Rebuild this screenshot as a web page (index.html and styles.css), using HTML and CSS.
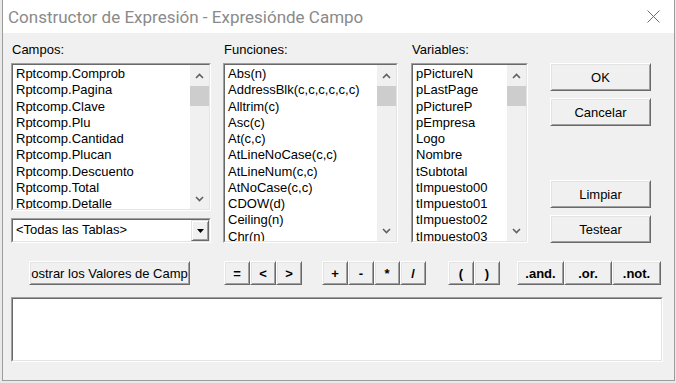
FILE: index.html
```html
<!DOCTYPE html>
<html lang="es">
<head>
<meta charset="utf-8">
<title>Constructor de Expresión</title>
<link rel="stylesheet" href="styles.css">
</head>
<body>
<div class="window">
  <div class="titlebar">
    <span class="title">Constructor de Expresión - Expresiónde Campo</span>
    <span class="close"><svg width="13" height="13" viewBox="0 0 13 13"><path d="M0.5 0.5 L12.5 12.5 M12.5 0.5 L0.5 12.5" stroke="#6e6e6e" stroke-width="1" fill="none"/></svg></span>
  </div>
  <div class="client">
    <div class="top">
      <div class="col col-campos">
        <div class="label">Campos:</div>
        <div class="sunken list list-short">
          <div class="in">
            <div class="items">
              <div>Rptcomp.Comprob</div>
              <div>Rptcomp.Pagina</div>
              <div>Rptcomp.Clave</div>
              <div>Rptcomp.Plu</div>
              <div>Rptcomp.Cantidad</div>
              <div>Rptcomp.Plucan</div>
              <div>Rptcomp.Descuento</div>
              <div>Rptcomp.Total</div>
              <div>Rptcomp.Detalle</div>
            </div>
            <div class="vscroll">
              <div class="arr"><svg width="9" height="6" viewBox="0 0 9 6"><path d="M1 5 L4.5 1.5 L8 5" stroke="#606060" stroke-width="1.6" fill="none"/></svg></div>
              <div class="thumb"></div>
              <div class="track"></div>
              <div class="arr"><svg width="9" height="6" viewBox="0 0 9 6"><path d="M1 1 L4.5 4.5 L8 1" stroke="#606060" stroke-width="1.6" fill="none"/></svg></div>
            </div>
          </div>
        </div>
        <div class="sunken combo">
          <div class="in">
            <span class="combo-text">&lt;Todas las Tablas&gt;</span>
            <span class="combo-btn"><svg width="7" height="4" viewBox="0 0 7 4"><path d="M0 0 L7 0 L3.5 4 Z" fill="#000"/></svg></span>
          </div>
        </div>
      </div>
      <div class="col col-func">
        <div class="label">Funciones:</div>
        <div class="sunken list">
          <div class="in">
            <div class="items">
              <div>Abs(n)</div>
              <div>AddressBlk(c,c,c,c,c,c)</div>
              <div>Alltrim(c)</div>
              <div>Asc(c)</div>
              <div>At(c,c)</div>
              <div>AtLineNoCase(c,c)</div>
              <div>AtLineNum(c,c)</div>
              <div>AtNoCase(c,c)</div>
              <div>CDOW(d)</div>
              <div>Ceiling(n)</div>
              <div>Chr(n)</div>
            </div>
            <div class="vscroll">
              <div class="arr"><svg width="9" height="6" viewBox="0 0 9 6"><path d="M1 5 L4.5 1.5 L8 5" stroke="#606060" stroke-width="1.6" fill="none"/></svg></div>
              <div class="thumb"></div>
              <div class="track"></div>
              <div class="arr"><svg width="9" height="6" viewBox="0 0 9 6"><path d="M1 1 L4.5 4.5 L8 1" stroke="#606060" stroke-width="1.6" fill="none"/></svg></div>
            </div>
          </div>
        </div>
      </div>
      <div class="col col-vars">
        <div class="label">Variables:</div>
        <div class="sunken list">
          <div class="in">
            <div class="items">
              <div>pPictureN</div>
              <div>pLastPage</div>
              <div>pPictureP</div>
              <div>pEmpresa</div>
              <div>Logo</div>
              <div>Nombre</div>
              <div>tSubtotal</div>
              <div>tImpuesto00</div>
              <div>tImpuesto01</div>
              <div>tImpuesto02</div>
              <div>tImpuesto03</div>
            </div>
            <div class="vscroll">
              <div class="arr"><svg width="9" height="6" viewBox="0 0 9 6"><path d="M1 5 L4.5 1.5 L8 5" stroke="#606060" stroke-width="1.6" fill="none"/></svg></div>
              <div class="thumb"></div>
              <div class="track"></div>
              <div class="arr"><svg width="9" height="6" viewBox="0 0 9 6"><path d="M1 1 L4.5 4.5 L8 1" stroke="#606060" stroke-width="1.6" fill="none"/></svg></div>
            </div>
          </div>
        </div>
      </div>
      <div class="col col-btns">
        <div class="btn btn-side">OK</div>
        <div class="btn btn-side btn-cancel">Cancelar</div>
        <div class="btn btn-side btn-clear">Limpiar</div>
        <div class="btn btn-side btn-test">Testear</div>
      </div>
    </div>
    <div class="ops">
      <div class="btn btn-show">ostrar los Valores de Camp</div>
      <div class="group g-cmp">
        <div class="btn op">=</div>
        <div class="btn op">&lt;</div>
        <div class="btn op">&gt;</div>
      </div>
      <div class="group g-arith">
        <div class="btn op">+</div>
        <div class="btn op">-</div>
        <div class="btn op">*</div>
        <div class="btn op">/</div>
      </div>
      <div class="group g-par">
        <div class="btn op">(</div>
        <div class="btn op">)</div>
      </div>
      <div class="group g-log">
        <div class="btn op lop w47">.and.</div>
        <div class="btn op lop w48">.or.</div>
        <div class="btn op lop w49">.not.</div>
      </div>
    </div>
    <div class="sunken editor"><div class="in"></div></div>
  </div>
</div>
</body>
</html>
```

FILE: styles.css
```css
* { box-sizing: border-box; }
html, body { margin: 0; padding: 0; }
body {
  background: #e9e9e9;
  width: 676px;
  height: 383px;
  overflow: hidden;
  font-family: "Liberation Sans", Arial, sans-serif;
  font-size: 13px;
  color: #000;
}
.window {
  margin-left: 2px;
  width: 673px;
  height: 381px;
  border: 1px solid #9c9c9c;
  border-top: none;
  background: #f0f0f0;
}
.titlebar {
  height: 33px;
  background: #fff;
  display: flex;
  align-items: center;
  padding-left: 5px;
  padding-right: 14px;
}
.title {
  font-family: Roboto, "Noto Sans", sans-serif;
  font-size: 17px;
  color: #8a8a8a;
}
.close { margin-left: auto; display: flex; }
.client {
  padding: 9px 11px 0 8px;
}
.top { display: flex; }
.col { display: flex; flex-direction: column; }
.col-campos { width: 200px; }
.col-func { width: 175px; margin-left: 12px; }
.col-vars { width: 117px; margin-left: 13px; }
.col-btns { width: 101px; margin-left: 22px; padding-top: 21px; }
.label {
  height: 21px;
  line-height: 16px;
  padding-left: 1px;
}
.sunken {
  border: 1px solid;
  border-color: #a0a0a0 #fff #fff #a0a0a0;
}
.sunken > .in {
  height: 100%;
  border: 1px solid;
  border-color: #696969 #e3e3e3 #e3e3e3 #696969;
  background: #fff;
}
.list { height: 180px; }
.list-short { height: 148px; }
.list > .in { display: flex; }
.items {
  flex: 1;
  min-width: 0;
  overflow: hidden;
  padding: 1px 0 0 3px;
  line-height: 16.25px;
  white-space: nowrap;
}
.vscroll {
  width: 19px;
  background: #f0f0f0;
  display: flex;
  flex-direction: column;
}
.arr {
  height: 21px;
  display: flex;
  align-items: center;
  justify-content: center;
}
.thumb { height: 20px; background: #cdcdcd; }
.track { flex: 1; }
.combo { height: 25px; margin-top: 7px; }
.combo > .in { display: flex; align-items: stretch; }
.combo-text { flex: 1; padding-left: 3px; line-height: 20px; }
.combo-btn {
  width: 18px;
  display: flex;
  align-items: center;
  justify-content: center;
  background: #f0f0f0;
  border: 1px solid;
  border-color: #e3e3e3 #696969 #696969 #e3e3e3;
  box-shadow: inset 1px 1px #fff, inset -1px -1px #a0a0a0;
}
.btn {
  display: flex;
  align-items: center;
  justify-content: center;
  background: #f0f0f0;
  border: 1px solid;
  border-color: #fff #696969 #696969 #fff;
  box-shadow: inset 1px 1px #e3e3e3, inset -1px -1px #a0a0a0;
  white-space: nowrap;
  overflow: hidden;
}
.btn-side { height: 28px; }
.btn-cancel { margin-top: 7px; }
.btn-clear { margin-top: 54px; }
.btn-test { margin-top: 7px; }
.ops {
  display: flex;
  height: 24px;
  margin-top: 18px;
  padding-left: 18px;
}
.btn-show { width: 161px; }
.group { display: flex; }
.g-cmp { margin-left: 34px; }
.g-arith { margin-left: 20px; }
.g-par { margin-left: 22px; }
.g-log { margin-left: 17px; }
.op { width: 26px; font-weight: bold; }
.w47 { width: 47px; }
.w48 { width: 48px; }
.w49 { width: 49px; }
.editor { height: 65px; margin-top: 12px; }
```
